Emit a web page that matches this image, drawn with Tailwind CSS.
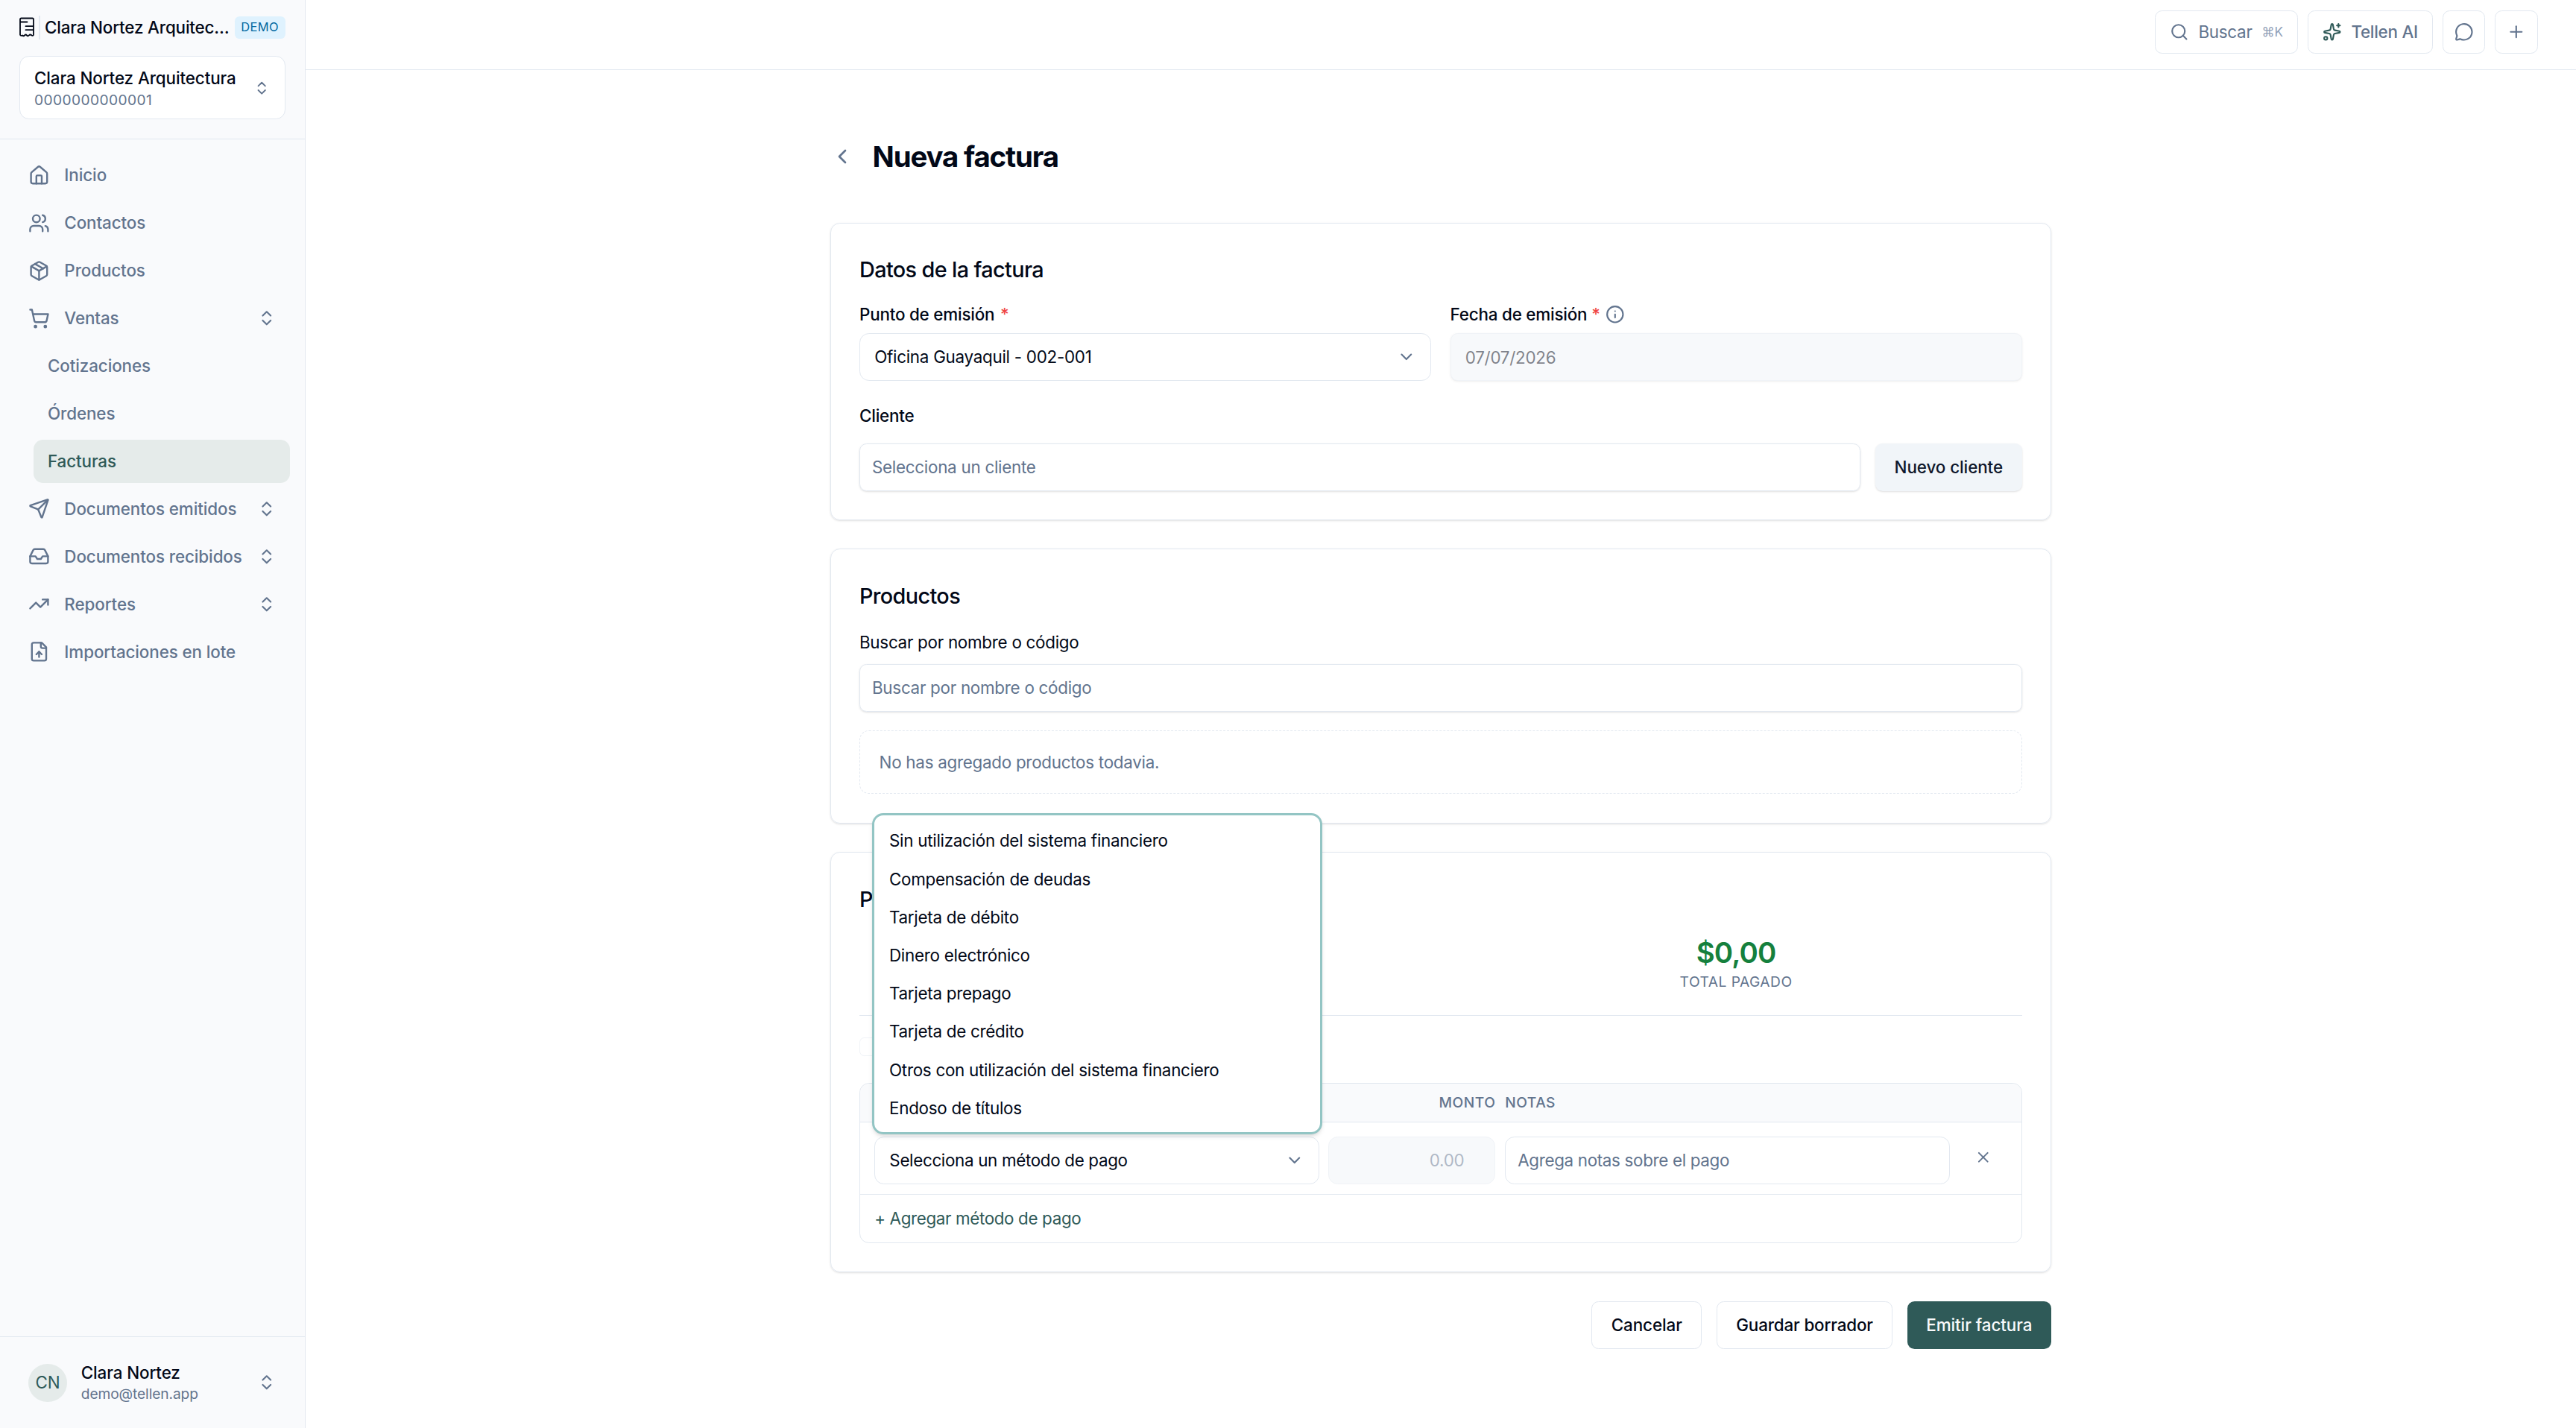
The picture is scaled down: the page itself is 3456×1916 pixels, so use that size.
<!DOCTYPE html>
<html lang="es" class="text-[25.6px]">
<head>
  <meta charset="UTF-8" />
  <meta name="viewport" content="width=device-width, initial-scale=1.0" />
  <title>Nueva factura</title>
  <script src="https://cdn.jsdelivr.net/npm/@tailwindcss/browser@4"></script>
</head>
<body class="bg-white font-['Inter',sans-serif] text-sm tracking-[-0.27px] text-[#020817] antialiased">
  <!-- Iconos -->
  <svg class="hidden">
    <symbol id="updown" viewBox="0 0 24 24"><path d="m7 15 5 5 5-5" /><path d="m7 9 5-5 5 5" /></symbol>
    <symbol id="down" viewBox="0 0 24 24"><path d="m6 9 6 6 6-6" /></symbol>
  </svg>

  <div class="flex h-screen fill-none stroke-2 [stroke-linecap:round] [stroke-linejoin:round]">
    <!-- Barra lateral -->
    <aside class="flex w-64 shrink-0 flex-col border-r border-slate-200 bg-[#f9fafc] tracking-[-0.1px] whitespace-nowrap">
      <div class="flex h-[187px] flex-col border-b border-slate-200 px-[26px] pt-[21px]">
        <div class="flex h-[32px] items-center">
          <svg class="h-[28px] w-[20px] shrink-0 stroke-[#020817]" viewBox="0 0 20 28"><path d="M1 23.500V3Q1 1.500 2.500 1.500H17.500Q19 1.500 19 3V23.500Q18.500 25.500 16.500 24.500Q14.500 22.500 12.800 24.500Q11.500 26 10 24.500Q8.500 22.500 7 24.500Q5.500 26 4 24.500Q1.500 25.500 1 23.500M2 6.500H10.500M8.500 12.200H18M8.500 17.200H18" stroke-width="1.800" /></svg>
          <div class="ml-[6px] h-[32px] w-[2px] bg-slate-200"></div>
          <span class="ml-[6px] grow font-medium tracking-[-0.16px]">Clara Nortez Arquitec…</span>
          <span class="flex h-[30px] w-[68px] shrink-0 items-center justify-center rounded bg-sky-100 text-[16.5px] tracking-[0.3px] text-[#0369a1]">DEMO</span>
        </div>
        <div class="mt-[22px] flex h-[85px] items-center justify-between rounded-lg border border-slate-200 bg-white pt-[1px] pr-[19px] pl-[19px]">
          <div>
            <div class="leading-[31px] font-medium">Clara Nortez Arquitectura</div>
            <div class="text-xs leading-[28px] tracking-[0.4px] text-slate-500">0000000000001</div>
          </div>
          <svg class="size-3.5 stroke-slate-500"><use href="#updown" /></svg>
        </div>
      </div>

      <nav class="flex grow flex-col gap-1 p-3 font-medium text-slate-500">
        <a class="flex h-9 items-center gap-3 px-3">
          <svg class="size-4.5 stroke-current" viewBox="0 0 24 24"><path d="M15 21v-8a1 1 0 0 0-1-1h-4a1 1 0 0 0-1 1v8" /><path d="M3 10a2 2 0 0 1 .709-1.528l7-5.999a2 2 0 0 1 2.582 0l7 5.999A2 2 0 0 1 21 10v9a2 2 0 0 1-2 2H5a2 2 0 0 1-2-2z" /></svg>
          Inicio
        </a>
        <a class="flex h-9 items-center gap-3 px-3">
          <svg class="size-4.5 stroke-current" viewBox="0 0 24 24"><path d="M16 21v-2a4 4 0 0 0-4-4H6a4 4 0 0 0-4 4v2" /><circle cx="9" cy="7" r="4" /><path d="M22 21v-2a4 4 0 0 0-3-3.870" /><path d="M16 3.130a4 4 0 0 1 0 7.750" /></svg>
          Contactos
        </a>
        <a class="flex h-9 items-center gap-3 px-3">
          <svg class="size-4.5 stroke-current" viewBox="0 0 24 24"><path d="m7.500 4.270 9 5.150" /><path d="M21 8a2 2 0 0 0-1-1.730l-7-4a2 2 0 0 0-2 0l-7 4A2 2 0 0 0 3 8v8a2 2 0 0 0 1 1.730l7 4a2 2 0 0 0 2 0l7-4A2 2 0 0 0 21 16Z" /><path d="m3.300 7 8.700 5 8.700-5" /><path d="M12 22V12" /></svg>
          Productos
        </a>
        <a class="flex h-9 items-center gap-3 px-3">
          <svg class="size-4.5 stroke-current" viewBox="0 0 24 24"><circle cx="8" cy="21" r="1" /><circle cx="19" cy="21" r="1" /><path d="M2.050 2.050h2l2.660 12.420a2 2 0 0 0 2 1.580h9.780a2 2 0 0 0 1.950-1.570l1.650-7.430H5.120" /></svg>
          Ventas
          <svg class="ml-auto size-4 stroke-current"><use href="#updown" /></svg>
        </a>
        <a class="ml-4 flex h-9 items-center px-3">Cotizaciones</a>
        <a class="ml-4 flex h-9 items-center px-3">Órdenes</a>
        <a class="ml-4 flex h-9 items-center rounded-lg bg-[#e5ebea] px-3 text-[#2f5a58]">Facturas</a>
        <a class="flex h-9 items-center gap-3 px-3">
          <svg class="size-4.5 stroke-current" viewBox="0 0 24 24"><path d="M14.536 21.686a.5.5 0 0 0 .937-.024l6.500-19a.496.496 0 0 0-.635-.635l-19 6.500a.5.5 0 0 0-.024.937l7.930 3.180a2 2 0 0 1 1.112 1.110z" /><path d="m21.854 2.147-10.940 10.939" /></svg>
          Documentos emitidos
          <svg class="ml-auto size-4 stroke-current"><use href="#updown" /></svg>
        </a>
        <a class="flex h-9 items-center gap-3 px-3">
          <svg class="size-4.5 stroke-current" viewBox="0 0 24 24"><path d="M22 12h-6l-2 3h-4l-2-3H2" /><path d="M5.450 5.110 2 12v6a2 2 0 0 0 2 2h16a2 2 0 0 0 2-2v-6l-3.450-6.890A2 2 0 0 0 16.760 4H7.240a2 2 0 0 0-1.790 1.110z" /></svg>
          Documentos recibidos
          <svg class="ml-auto size-4 stroke-current"><use href="#updown" /></svg>
        </a>
        <a class="flex h-9 items-center gap-3 px-3">
          <svg class="size-4.5 stroke-current" viewBox="0 0 24 24"><path d="M22 7 13.500 15.500 8.500 10.500 2 17" /><path d="M16 7h6v6" /></svg>
          Reportes
          <svg class="ml-auto size-4 stroke-current"><use href="#updown" /></svg>
        </a>
        <a class="flex h-9 items-center gap-3 px-3">
          <svg class="size-4.5 stroke-current" viewBox="0 0 24 24"><path d="M15 2H6a2 2 0 0 0-2 2v16a2 2 0 0 0 2 2h12a2 2 0 0 0 2-2V7Z" /><path d="M14 2v4a2 2 0 0 0 2 2h4" /><path d="M12 12v6" /><path d="m15 15-3-3-3 3" /></svg>
          Importaciones en lote
        </a>
      </nav>

      <div class="border-t border-slate-200 p-3">
        <div class="flex items-center px-3 py-2">
          <div class="flex size-8 items-center justify-center rounded-full bg-[#e5ebea] text-[#2f5a58]">CN</div>
          <div class="ml-3">
            <div class="leading-5 font-medium">Clara Nortez</div>
            <div class="text-xs text-slate-500">demo@tellen.app</div>
          </div>
          <svg class="ml-auto size-4 stroke-slate-500"><use href="#updown" /></svg>
        </div>
      </div>
    </aside>

    <div class="flex grow flex-col">
      <!-- Cabecera -->
      <header class="flex h-[94px] justify-end gap-2 border-b border-slate-200 px-8 pt-[14px] text-slate-500">
        <button class="flex h-9 items-center gap-2 rounded-md border border-slate-200 px-3">
          <svg class="size-4 stroke-current" viewBox="0 0 24 24"><circle cx="11" cy="11" r="8" /><path d="m21 21-4.300-4.300" /></svg>
          Buscar
          <span class="text-[17px] tracking-normal text-slate-400">⌘K</span>
        </button>
        <button class="flex h-9 items-center gap-2 rounded-md border border-slate-200 px-3 font-medium">
          <svg class="size-4 stroke-[#2f5a58]" viewBox="0 0 24 24"><path d="M11.017 2.814a1 1 0 0 1 1.966 0l1.051 5.558a2 2 0 0 0 1.594 1.594l5.558 1.051a1 1 0 0 1 0 1.966l-5.558 1.051a2 2 0 0 0-1.594 1.594l-1.051 5.558a1 1 0 0 1-1.966 0l-1.051-5.558a2 2 0 0 0-1.594-1.594l-5.558-1.051a1 1 0 0 1 0-1.966l5.558-1.051a2 2 0 0 0 1.594-1.594z" /><path d="M20 2v4" /><path d="M22 4h-4" /><circle cx="4" cy="20" r="2" /></svg>
          Tellen AI
        </button>
        <button class="flex size-9 items-center justify-center rounded-md border border-slate-200">
          <svg class="size-4 stroke-current" viewBox="0 0 24 24"><path d="M2.992 16.342a2 2 0 0 1 .094 1.167l-1.065 3.290a1 1 0 0 0 1.236 1.168l3.413-.998a2 2 0 0 1 1.099.092 10 10 0 1 0-4.777-4.719" /></svg>
        </button>
        <button class="flex size-9 items-center justify-center rounded-md border border-slate-200">
          <svg class="size-4 stroke-current" viewBox="0 0 24 24"><path d="M5 12h14" /><path d="M12 5v14" /></svg>
        </button>
      </header>

      <main class="mx-auto w-full max-w-5xl">
        <div class="flex h-[205px] items-center pt-[29px]">
          <svg class="-mt-[2px] size-5 stroke-slate-500" viewBox="0 0 24 24"><path d="m15 18-6-6 6-6" /></svg>
          <h1 class="-mt-[1px] ml-[25px] text-2xl font-bold tracking-[-1.15px]">Nueva factura</h1>
        </div>

        <!-- Datos de la factura -->
        <section class="h-[399px] rounded-lg border border-slate-200 p-6 shadow-sm">
          <h2 class="pt-[2px] text-lg leading-7 font-medium tracking-[-0.62px]">Datos de la factura</h2>
          <div class="mt-[21px] grid grid-cols-2 gap-4">
            <div>
              <label class="block leading-5 font-medium tracking-[-0.2px]">Punto de emisión <span class="ml-[2px] text-[#ef4444]">*</span></label>
              <div class="mt-[9px] flex h-10 items-center justify-between rounded-lg border border-slate-200 px-3">
                Oficina Guayaquil - 002-001
                <svg class="size-4 stroke-slate-500"><use href="#down" /></svg>
              </div>
            </div>
            <div>
              <label class="flex items-center leading-5 font-medium tracking-[-0.2px]">Fecha de emisión <span class="ml-[6px] text-[#ef4444]">*</span>
                <svg class="ml-[7px] size-4 stroke-slate-500" viewBox="0 0 24 24"><circle cx="12" cy="12" r="10" /><path d="M12 16v-4" /><path d="M12 8h.010" /></svg>
              </label>
              <div class="mt-[9px] flex h-10 items-center rounded-md border border-slate-200 bg-slate-100 px-3 pt-[2px] opacity-50 shadow-sm">07/07/2026</div>
            </div>
          </div>
          <label class="mt-[31px] block leading-5 font-medium tracking-[-0.2px]">Cliente</label>
          <div class="mt-[21px] flex gap-[20px]">
            <div class="flex h-10 grow items-center rounded-md border border-slate-200 px-2.5 text-slate-500 shadow-sm">Selecciona un cliente</div>
            <button class="h-10 rounded-md bg-slate-100 px-4 font-medium tracking-[-0.08px] text-slate-900 shadow-sm">Nuevo cliente</button>
          </div>
        </section>

        <!-- Productos -->
        <section class="mt-6 h-[368.4px] rounded-lg border border-slate-200 p-6 shadow-sm">
          <h2 class="pt-[2px] text-lg leading-7 font-medium tracking-[-0.62px]">Productos</h2>
          <label class="mt-[23px] block leading-5">Buscar por nombre o código</label>
          <div class="mt-[13px] flex h-10 items-center rounded-md border border-slate-200 px-2.5 text-slate-500 shadow-sm">Buscar por nombre o código</div>
          <div class="mt-4 rounded-lg border border-dashed border-slate-200 p-4 leading-5 text-slate-500">No has agregado productos todavia.</div>
        </section>

        <!-- Pagos -->
        <section class="mt-6 h-[564px] rounded-lg border border-slate-200 p-6 shadow-sm">
          <h2 class="pt-[2px] text-lg leading-7 font-medium tracking-[-0.62px]">Pagos</h2>
          <div class="mt-[24px] grid h-[110px] grid-cols-2 gap-4 border-b border-slate-200">
            <div></div>
            <div class="text-center">
              <div class="text-2xl leading-8 font-semibold tracking-[-0.9px] text-[#15803d]">$0,00</div>
              <div class="text-xs tracking-wide text-slate-500 uppercase">Total pagado</div>
            </div>
          </div>
          <div class="mt-[29px] h-[25px] w-[42px] rounded border border-slate-200 opacity-50"></div>

          <div class="relative mt-[36px] rounded-lg border border-slate-200">
            <div class="grid h-[52px] grid-cols-[1fr_224px_1fr_64px] items-center gap-2 rounded-t-lg border-b border-slate-200 bg-[#f9fafc] px-3 text-xs font-medium tracking-wide text-slate-500 uppercase">
              <div></div>
              <div class="text-right">Monto</div>
              <div>Notas</div>
            </div>
            <div class="grid h-[97px] grid-cols-[1fr_224px_1fr_64px] gap-2 border-b border-slate-200 px-3 pt-[18.5px]">
              <div class="flex h-10 items-center justify-between rounded-lg border border-slate-200 px-3 tracking-[-0.33px]">
                Selecciona un método de pago
                <svg class="size-4 stroke-slate-500"><use href="#down" /></svg>
              </div>
              <div class="flex h-10 items-center justify-end rounded-lg border border-slate-200 bg-slate-100 pr-[41px] text-slate-500 opacity-50">0.00</div>
              <div class="flex h-10 items-center rounded-lg border border-slate-200 px-2.5 tracking-[-0.33px] text-slate-500">Agrega notas sobre el pago</div>
              <button class="flex h-[55px] items-center justify-center">
                <svg class="size-[23.5px] stroke-slate-500" viewBox="0 0 24 24"><path d="M18 6 6 18" /><path d="m6 6 12 12" /></svg>
              </button>
            </div>
            <div class="flex h-[64px] items-center px-3 tracking-[-0.36px] text-[#2f5a58]">+ Agregar método de pago</div>

            <!-- Menú de métodos de pago -->
            <div class="absolute bottom-[145px] left-[16px] h-[431px] w-[604px] rounded-[15px] border-[3px] border-[#93c5c4] bg-white px-[20px] py-[8px] leading-8 shadow-md">
              <div>Sin utilización del sistema financiero</div>
              <div>Compensación de deudas</div>
              <div>Tarjeta de débito</div>
              <div>Dinero electrónico</div>
              <div>Tarjeta prepago</div>
              <div>Tarjeta de crédito</div>
              <div>Otros con utilización del sistema financiero</div>
              <div>Endoso de títulos</div>
            </div>
          </div>
        </section>

        <div class="mt-6 flex justify-end gap-3 font-medium tracking-[-0.06px]">
          <button class="h-10 rounded-md border border-slate-200 px-4">Cancelar</button>
          <button class="h-10 rounded-md border border-slate-200 px-4 tracking-[-0.15px]">Guardar borrador</button>
          <button class="h-10 rounded-md bg-[#2f5a58] px-4 text-slate-50">Emitir factura</button>
        </div>
      </main>
    </div>
  </div>
</body>
</html>
